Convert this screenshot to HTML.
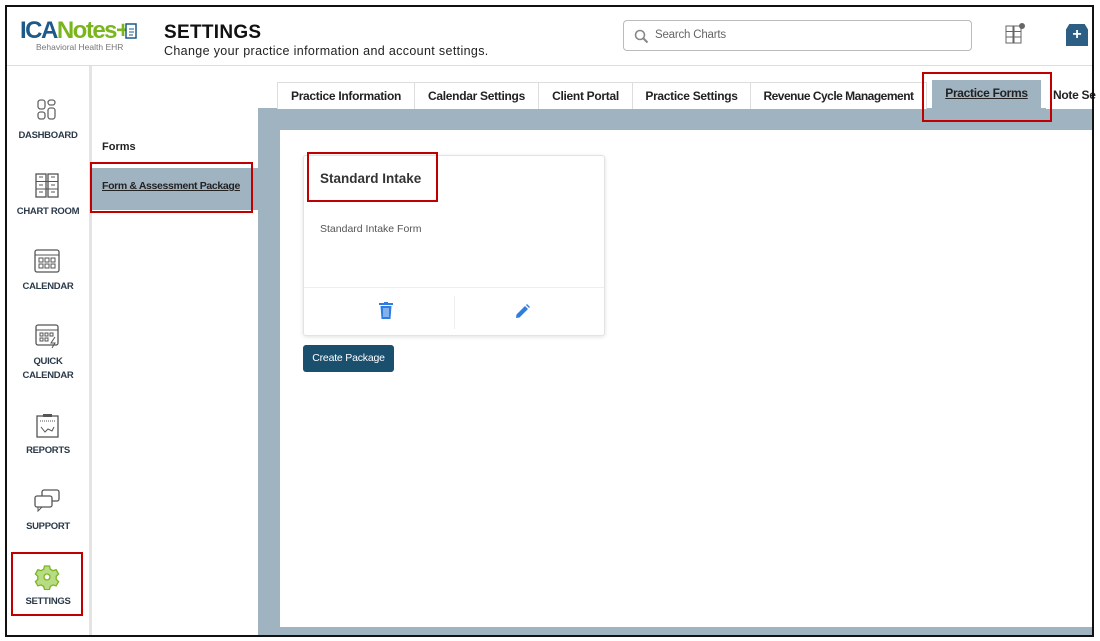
<!DOCTYPE html>
<html><head><meta charset="utf-8"><style>
*{box-sizing:border-box;margin:0;padding:0}
body{width:1100px;height:641px;background:#fff;font-family:"Liberation Sans",sans-serif;position:relative;overflow:hidden;color:#222}
.abs{position:absolute}
.nav{position:absolute;left:7px;width:82px;text-align:center;font-size:9.5px;font-weight:bold;color:#2b3a4a;letter-spacing:-0.3px}
.tab{position:absolute;top:82px;height:27px;font-size:12px;font-weight:bold;color:#222;line-height:27px;text-align:center;border-right:1px solid #ddd;border-top:1px solid #ddd;background:#fff;letter-spacing:-0.3px;white-space:nowrap}
.red{position:absolute;border:2px solid #c00000}
</style></head><body>
 <div class="abs" style="left:7px;top:65px;width:1086px;border-top:1px solid #ddd"></div>
 <div class="abs" style="left:20px;top:17px;font-size:24px;font-weight:bold;letter-spacing:-1.5px;color:#1d5a8a">ICA<span style="color:#7ab51d">Notes+</span></div>
 <svg class="abs" style="left:122px;top:23px" width="16" height="18" viewBox="0 0 16 18"><rect x="4" y="1" width="10" height="14" fill="#fff" stroke="#1d5a8a" stroke-width="1.5"/><path d="M7 6h5M7 9h5M7 12h4" stroke="#1d5a8a"/></svg>
 <div class="abs" style="left:36px;top:42px;font-size:8.5px;color:#777">Behavioral Health EHR</div>
 <div class="abs" style="left:164px;top:22px;font-size:19px;font-weight:bold;color:#111;letter-spacing:0.3px">SETTINGS</div>
 <div class="abs" style="left:164px;top:44px;font-size:12.5px;color:#222;letter-spacing:0.35px">Change your practice information and account settings.</div>
 <div class="abs" style="left:623px;top:20px;width:349px;height:31px;border:1px solid #bbb;border-radius:4px">
  <svg class="abs" style="left:10px;top:8px" width="15" height="15" viewBox="0 0 15 15"><circle cx="6" cy="6" r="4.5" fill="none" stroke="#888" stroke-width="1.6"/><path d="M9.5 9.5L13.5 13.5" stroke="#888" stroke-width="2"/></svg>
  <div class="abs" style="left:31px;top:8px;font-size:11.5px;color:#666;letter-spacing:-0.2px">Search Charts</div>
 </div>
 <svg class="abs" style="left:1005px;top:22px" width="22" height="22" viewBox="0 0 22 22"><rect x="1" y="4" width="7" height="17" fill="none" stroke="#666"/><rect x="9" y="4" width="7" height="17" fill="none" stroke="#666"/><path d="M1 9.5h15M1 15h15" stroke="#666"/><circle cx="17" cy="4" r="3" fill="#666"/></svg>
 <div class="abs" style="left:1066px;top:24px;width:22px;height:22px;background:#2d5f85;color:#fff;font-weight:bold;text-align:center;line-height:22px;font-size:16px;clip-path:polygon(15% 0,85% 0,100% 25%,100% 100%,0 100%,0 25%)">+</div>

 <div class="abs" style="left:89px;top:66px;width:3px;height:570px;background:#e4e4e4"></div>
 <svg class="abs" style="left:37px;top:99px" width="20" height="22" viewBox="0 0 20 22"><rect x="1" y="1" width="7" height="9" rx="2.5" fill="none" stroke="#666" stroke-width="1.3"/><rect x="11" y="1" width="7" height="5" rx="2.5" fill="none" stroke="#666" stroke-width="1.3"/><rect x="1" y="13" width="7" height="7" rx="2.5" fill="none" stroke="#666" stroke-width="1.3"/><rect x="11" y="9" width="7" height="11" rx="2.5" fill="none" stroke="#666" stroke-width="1.3"/></svg>
 <div class="nav" style="top:130px">DASHBOARD</div>
 <svg class="abs" style="left:35px;top:173px" width="24" height="26" viewBox="0 0 24 26"><rect x="1" y="1" width="10" height="23" fill="none" stroke="#555" stroke-width="1.3"/><rect x="13" y="1" width="10" height="23" fill="none" stroke="#555" stroke-width="1.3"/><path d="M1 8.5h22M1 16h22M4 4h4M16 4h4M4 12h4M16 12h4M4 19h4M16 19h4" stroke="#555"/></svg>
 <div class="nav" style="top:206px">CHART ROOM</div>
 <svg class="abs" style="left:34px;top:248px" width="26" height="26" viewBox="0 0 26 26"><rect x="1" y="2" width="24" height="22" rx="2" fill="none" stroke="#555" stroke-width="1.3"/><path d="M1 7h24" stroke="#555"/><rect x="5" y="10" width="4" height="4" fill="none" stroke="#555"/><rect x="11" y="10" width="4" height="4" fill="none" stroke="#555"/><rect x="17" y="10" width="4" height="4" fill="none" stroke="#555"/><rect x="5" y="16" width="4" height="4" fill="none" stroke="#555"/><rect x="11" y="16" width="4" height="4" fill="none" stroke="#555"/><rect x="17" y="16" width="4" height="4" fill="none" stroke="#555"/></svg>
 <div class="nav" style="top:281px">CALENDAR</div>
 <svg class="abs" style="left:35px;top:323px" width="26" height="26" viewBox="0 0 26 26"><rect x="1" y="2" width="22" height="20" rx="2" fill="none" stroke="#555" stroke-width="1.3"/><path d="M1 7h22M20 14l-4 6h4l-3 5" stroke="#555" fill="none"/><rect x="5" y="10" width="3" height="3" fill="none" stroke="#555"/><rect x="10" y="10" width="3" height="3" fill="none" stroke="#555"/><rect x="15" y="10" width="3" height="3" fill="none" stroke="#555"/><rect x="5" y="15" width="3" height="3" fill="none" stroke="#555"/><rect x="10" y="15" width="3" height="3" fill="none" stroke="#555"/></svg>
 <div class="nav" style="top:355px;line-height:14px">QUICK<br>CALENDAR</div>
 <svg class="abs" style="left:36px;top:413px" width="24" height="26" viewBox="0 0 24 26"><rect x="1" y="3" width="21" height="21" fill="none" stroke="#555" stroke-width="1.3"/><rect x="7" y="1" width="9" height="3" fill="#555"/><path d="M5 14l4 5 3-3 4 2 2-4" stroke="#555" fill="none"/><path d="M4 8h15" stroke="#555" stroke-dasharray="1 1"/></svg>
 <div class="nav" style="top:445px">REPORTS</div>
 <svg class="abs" style="left:33px;top:489px" width="28" height="24" viewBox="0 0 28 24"><rect x="9" y="1" width="17" height="11" rx="2" fill="none" stroke="#555" stroke-width="1.3"/><rect x="2" y="7" width="17" height="11" rx="2" fill="#fff" stroke="#555" stroke-width="1.3"/><path d="M5 18v4l4-4" stroke="#555" fill="none"/></svg>
 <div class="nav" style="top:521px">SUPPORT</div>
 <div class="red" style="left:11px;top:552px;width:72px;height:64px"></div>
 <svg class="abs" style="left:34px;top:564px" width="26" height="26" viewBox="0 0 26 26"><g transform="translate(13 13)" fill="#b8dc86" stroke="#7ab51d" stroke-width="1.3"><path d="M-2.5 -11h5l.8 3.2 2.6 1.5 3.2-1 2.5 4.3-2.4 2.3v3l2.4 2.3-2.5 4.3-3.2-1-2.6 1.5-.8 3.2h-5l-.8-3.2-2.6-1.5-3.2 1-2.5-4.3 2.4-2.3v-3l-2.4-2.3 2.5-4.3 3.2 1 2.6-1.5z"/><circle r="3" fill="#fff"/></g></svg>
 <div class="nav" style="top:596px">SETTINGS</div>

 <div class="abs" style="left:102px;top:141px;font-size:11px;font-weight:bold">Forms</div>
 <div class="abs" style="left:92px;top:168px;width:166px;height:42px;background:#a0b3c0"></div>
 <div class="abs" style="left:102px;top:180px;font-size:10.5px;font-weight:bold;text-decoration:underline;letter-spacing:-0.35px">Form &amp; Assessment Package</div>
 <div class="red" style="left:90px;top:162px;width:163px;height:51px"></div>

 <div class="abs" style="left:258px;top:108px;width:835px;height:527px;background:#a0b3c0"></div>
 <div class="abs" style="left:280px;top:130px;width:813px;height:497px;background:#fff"></div>
 <div class="tab" style="left:277px;width:138px;border-left:1px solid #ddd">Practice Information</div>
 <div class="tab" style="left:415px;width:124px">Calendar Settings</div>
 <div class="tab" style="left:539px;width:94px">Client Portal</div>
 <div class="tab" style="left:633px;width:118px">Practice Settings</div>
 <div class="tab" style="left:751px;width:176px;letter-spacing:-0.5px">Revenue Cycle Management</div>
 <div class="tab" style="left:932px;top:80px;height:29px;width:109px;background:#a0b3c0;border:none;text-decoration:underline">Practice Forms</div>
 <div class="tab" style="left:1046px;width:60px;text-align:left;padding-left:7px;border:none">Note Se</div>
 <div class="red" style="left:922px;top:72px;width:130px;height:50px"></div>

 <div class="abs" style="left:303px;top:155px;width:302px;height:181px;border:1px solid #e3e3e3;border-radius:3px;box-shadow:0 1px 4px rgba(0,0,0,.12);background:#fff">
  <div class="abs" style="left:16px;top:15px;font-size:13.5px;font-weight:bold;color:#333">Standard Intake</div>
  <div class="abs" style="left:16px;top:67px;font-size:10.5px;color:#555">Standard Intake Form</div>
  <div class="abs" style="left:0;top:131px;width:300px;border-top:1px solid #eee"></div>
  <div class="abs" style="left:150px;top:140px;height:33px;border-left:1px solid #eee"></div>
  <svg class="abs" style="left:75px;top:146px" width="14" height="17" viewBox="0 0 14 17"><rect x="0" y="1" width="14" height="2" fill="#2f7de1"/><rect x="5" y="0" width="4" height="2" fill="#2f7de1"/><path d="M1.5 4h11l-1 13h-9z" fill="#2f7de1"/><path d="M5 6v9M7 6v9M9 6v9" stroke="#fff" stroke-width=".8"/></svg>
  <svg class="abs" style="left:212px;top:148px" width="14" height="14" viewBox="0 0 14 14"><path d="M0 14l.5-3.5L9 2l3 3-8.5 8.5zM10 1l1-1 3 3-1 1z" fill="#2f7de1"/></svg>
 </div>
 <div class="red" style="left:307px;top:152px;width:131px;height:50px"></div>
 <div class="abs" style="left:303px;top:345px;width:91px;height:27px;background:#1b4f6e;border-radius:3px;color:#fff;font-size:10.5px;line-height:27px;text-align:center;letter-spacing:-0.2px">Create Package</div>

 <div class="abs" style="left:5px;top:5px;width:1089px;height:632px;border:2px solid #111"></div>
</body></html>
